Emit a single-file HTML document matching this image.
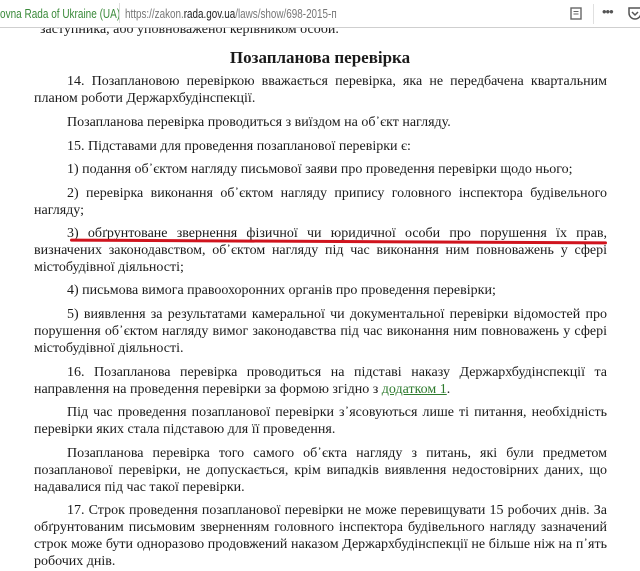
<!DOCTYPE html>
<html><head><meta charset="utf-8">
<style>
html,body{margin:0;padding:0;width:640px;height:560px;overflow:hidden;background:#fff;}
.bar{position:absolute;left:0;top:0;width:640px;height:27px;background:#fff;border-bottom:1px solid #cfcfcf;font-family:"Liberation Sans",sans-serif;font-size:13px;z-index:2;}
.site{position:absolute;left:0;top:6px;color:#3a8a3a;transform:scaleX(0.77);transform-origin:0 0;white-space:nowrap;}
.sep{position:absolute;left:119px;top:3px;width:1px;height:20px;background:#ddd;}
.url{position:absolute;left:125px;top:6px;color:#777;transform:scaleX(0.76);transform-origin:0 0;white-space:nowrap;}
.url b{font-weight:normal;color:#222;}
.l{position:absolute;left:34px;width:573px;font-family:"Liberation Serif",serif;font-size:14px;line-height:18px;color:#1a1a1a;white-space:nowrap;}
.j{text-align:justify;text-align-last:justify;white-space:normal;}
.i{left:67px;width:540px;}
h1{position:absolute;left:0;width:640px;top:48px;margin:0;text-align:center;font-family:"Liberation Serif",serif;font-size:17px;font-weight:bold;color:#1a1a1a;}
a{color:#2d7a2d;text-decoration:underline;}
</style></head><body>
<div class="bar">
<span class="site">ovna Rada of Ukraine (UA)</span>
<div class="sep"></div>
<span class="url">https://zakon.<b>rada.gov.ua</b>/laws/show/698-2015-п</span>
<svg style="position:absolute;left:570px;top:7px" width="12" height="13"><rect x="1" y="1" width="10" height="11" fill="none" stroke="#666" stroke-width="1.4"/><line x1="3.5" y1="4.5" x2="8.5" y2="4.5" stroke="#666"/><line x1="3.5" y1="7" x2="8.5" y2="7" stroke="#666"/></svg>
<div style="position:absolute;left:593px;top:4px;width:1px;height:20px;background:#e0e0e0"></div>
<span style="position:absolute;left:602px;top:4px;color:#555;font-size:13px;letter-spacing:-1px">•••</span>
<svg style="position:absolute;left:628px;top:7px" width="14" height="13"><path d="M1 1h12v5a6 6 0 0 1-12 0z" fill="none" stroke="#555" stroke-width="1.5"/><path d="M4 5l3 3 3-3" fill="none" stroke="#555" stroke-width="1.5"/></svg>
</div>
<div class="l" style="top:21px;left:40px">заступника, або уповноваженої керівником особи.</div>
<h1>Позапланова перевірка</h1>
<div class="l j i" style="top:73px">14. Позаплановою перевіркою вважається перевірка, яка не передбачена квартальним</div>
<div class="l" style="top:90px">планом роботи Держархбудінспекції.</div>
<div class="l i" style="top:114px">Позапланова перевірка проводиться з виїздом на об᾽єкт нагляду.</div>
<div class="l i" style="top:138px">15. Підставами для проведення позапланової перевірки є:</div>
<div class="l i" style="top:161px">1) подання об᾽єктом нагляду письмової заяви про проведення перевірки щодо нього;</div>
<div class="l j i" style="top:185px">2) перевірка виконання об᾽єктом нагляду припису головного інспектора будівельного</div>
<div class="l" style="top:202px">нагляду;</div>
<div class="l j i" style="top:225px">3) обґрунтоване звернення фізичної чи юридичної особи про порушення їх прав,</div>
<div style="position:absolute;left:70px;top:240px;width:537px;height:3px;background:#d0141e;border-radius:2px;transform:rotate(0.3deg)"></div>
<div class="l j" style="top:242px">визначених законодавством, об᾽єктом нагляду під час виконання ним повноважень у сфері</div>
<div class="l" style="top:259px">містобудівної діяльності;</div>
<div class="l i" style="top:282px">4) письмова вимога правоохоронних органів про проведення перевірки;</div>
<div class="l j i" style="top:306px">5) виявлення за результатами камеральної чи документальної перевірки відомостей про</div>
<div class="l j" style="top:323px">порушення об᾽єктом нагляду вимог законодавства під час виконання ним повноважень у сфері</div>
<div class="l" style="top:340px">містобудівної діяльності.</div>
<div class="l j i" style="top:364px">16. Позапланова перевірка проводиться на підставі наказу Держархбудінспекції та</div>
<div class="l" style="top:381px">направлення на проведення перевірки за формою згідно з <a>додатком 1</a>.</div>
<div class="l j i" style="top:404px">Під час проведення позапланової перевірки з᾽ясовуються лише ті питання, необхідність</div>
<div class="l" style="top:421px">перевірки яких стала підставою для її проведення.</div>
<div class="l j i" style="top:445px">Позапланова перевірка того самого об᾽єкта нагляду з питань, які були предметом</div>
<div class="l j" style="top:462px">позапланової перевірки, не допускається, крім випадків виявлення недостовірних даних, що</div>
<div class="l" style="top:479px">надавалися під час такої перевірки.</div>
<div class="l j i" style="top:502px">17. Строк проведення позапланової перевірки не може перевищувати 15 робочих днів. За</div>
<div class="l j" style="top:519px">обґрунтованим письмовим зверненням головного інспектора будівельного нагляду зазначений</div>
<div class="l j" style="top:536px">строк може бути одноразово продовжений наказом Держархбудінспекції не більше ніж на п᾽ять</div>
<div class="l" style="top:553px">робочих днів.</div>
</body></html>
